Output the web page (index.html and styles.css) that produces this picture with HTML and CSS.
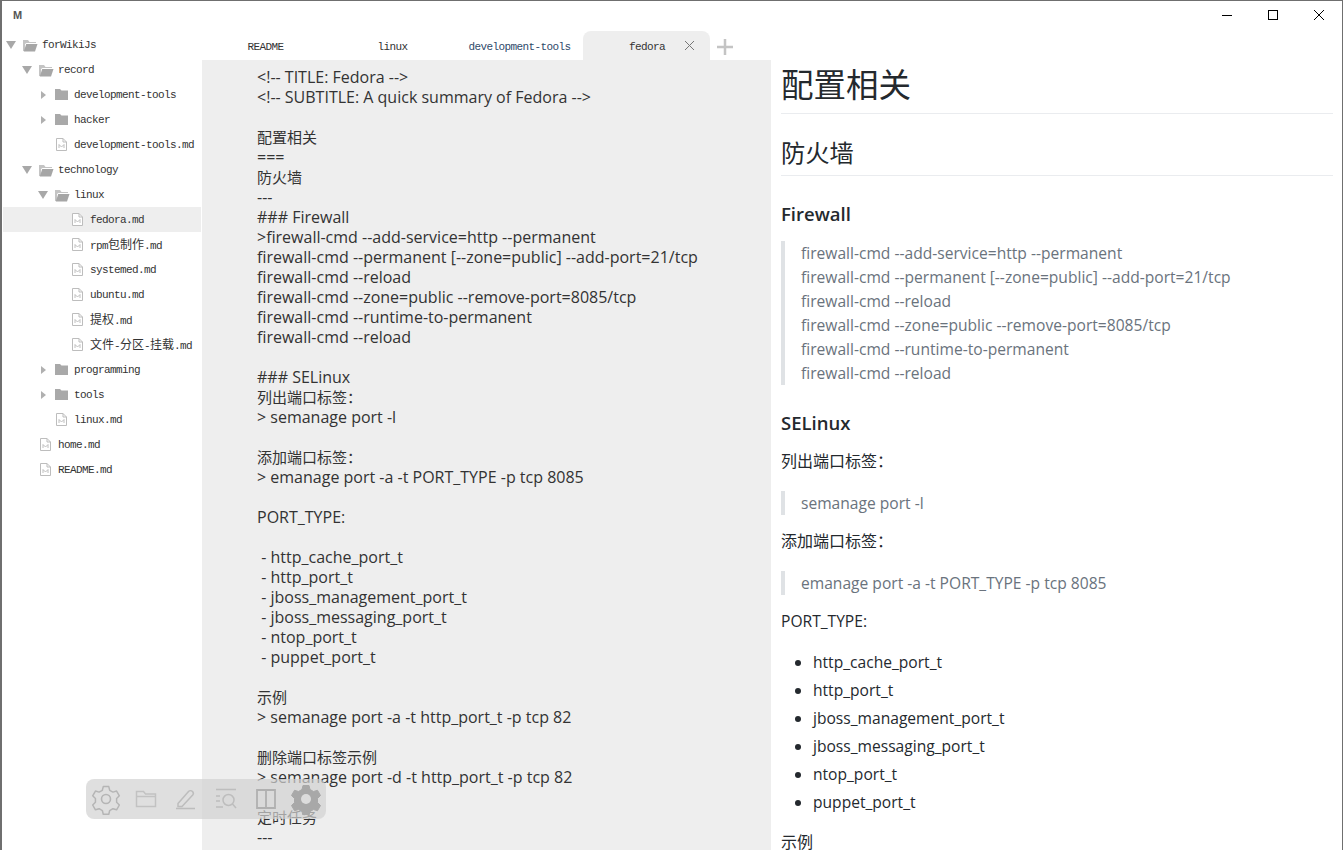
FILE: index.html
```html
<!DOCTYPE html>
<html lang="zh">
<head>
<meta charset="utf-8">
<title>Fedora</title>
<link rel="stylesheet" href="styles.css">
</head>
<body>
<svg class="defs" width="0" height="0" aria-hidden="true">
  <symbol id="open" viewBox="0 0 16 14"><path d="M1 13V2h5l1.500 2H14v1H4.500L3 6v7z" fill="#c4c4c4"/><path d="M4.200 6H15.500L13 13.500H1.800z" fill="#a6a6a6"/></symbol>
  <symbol id="closed" viewBox="0 0 13 11"><path d="M0 0h5l1.500 1.500H13V11H0z" fill="#a9a9a9"/></symbol>
  <symbol id="file" viewBox="0 0 11 13"><path d="M.5.500H7L10.500 4v8.500H.5z" fill="#fff" stroke="#bdbdbd"/><path d="M7 .5V4h3.500" fill="none" stroke="#bdbdbd"/><path d="M3 10V6.500l2.500 2.500 2.500-2.500V10" fill="none" stroke="#b0b0b0" stroke-width=".8"/></symbol>
</svg>
<div class="window">
  <header class="titlebar">
    <span class="app-logo">M</span>
    <div class="controls">
      <svg width="14" height="14" viewBox="0 0 14 14"><path d="M2 7.500h10" stroke="#000" fill="none"/></svg>
      <svg width="14" height="14" viewBox="0 0 14 14"><rect x="2.500" y="2.500" width="9" height="9" stroke="#000" fill="none"/></svg>
      <svg width="14" height="14" viewBox="0 0 14 14"><path d="M2 2l10 10M12 2L2 12" stroke="#000" fill="none"/></svg>
    </div>
  </header>
  <div class="main">
    <aside class="tree">
      <div class="row l0"><i class="tri-open"></i><svg class="ic-open"><use href="#open"/></svg><span>forWikiJs</span></div>
      <div class="row l1"><i class="tri-open"></i><svg class="ic-open"><use href="#open"/></svg><span>record</span></div>
      <div class="row l2"><i class="tri-closed"></i><svg class="ic-closed"><use href="#closed"/></svg><span>development-tools</span></div>
      <div class="row l2"><i class="tri-closed"></i><svg class="ic-closed"><use href="#closed"/></svg><span>hacker</span></div>
      <div class="row l2 leaf"><svg class="ic-file"><use href="#file"/></svg><span>development-tools.md</span></div>
      <div class="row l1"><i class="tri-open"></i><svg class="ic-open"><use href="#open"/></svg><span>technology</span></div>
      <div class="row l2"><i class="tri-open"></i><svg class="ic-open"><use href="#open"/></svg><span>linux</span></div>
      <div class="row l3 leaf active"><svg class="ic-file"><use href="#file"/></svg><span>fedora.md</span></div>
      <div class="row l3 leaf"><svg class="ic-file"><use href="#file"/></svg><span>rpm<b class="cjk">包制作</b>.md</span></div>
      <div class="row l3 leaf"><svg class="ic-file"><use href="#file"/></svg><span>systemed.md</span></div>
      <div class="row l3 leaf"><svg class="ic-file"><use href="#file"/></svg><span>ubuntu.md</span></div>
      <div class="row l3 leaf"><svg class="ic-file"><use href="#file"/></svg><span><b class="cjk">提权</b>.md</span></div>
      <div class="row l3 leaf"><svg class="ic-file"><use href="#file"/></svg><span><b class="cjk">文件</b>-<b class="cjk">分区</b>-<b class="cjk">挂载</b>.md</span></div>
      <div class="row l2"><i class="tri-closed"></i><svg class="ic-closed"><use href="#closed"/></svg><span>programming</span></div>
      <div class="row l2"><i class="tri-closed"></i><svg class="ic-closed"><use href="#closed"/></svg><span>tools</span></div>
      <div class="row l2 leaf"><svg class="ic-file"><use href="#file"/></svg><span>linux.md</span></div>
      <div class="row l1 leaf"><svg class="ic-file"><use href="#file"/></svg><span>home.md</span></div>
      <div class="row l1 leaf"><svg class="ic-file"><use href="#file"/></svg><span>README.md</span></div>
    </aside>
    <section class="workspace">
      <nav class="tabs">
        <div class="tab">README</div>
        <div class="tab">linux</div>
        <div class="tab tab-link">development-tools</div>
        <div class="tab current"><span>fedora</span><svg class="tab-close" width="11" height="11" viewBox="0 0 11 11"><path d="M1 1l9 9M10 1l-9 9" stroke="#777" fill="none"/></svg></div>
        <svg class="tab-add" width="18" height="18" viewBox="0 0 18 18"><path d="M9 1v16M1 9h16" stroke="#c4c4c4" stroke-width="2.500" fill="none"/></svg>
      </nav>
      <pre class="editor">&lt;!-- TITLE: Fedora --&gt;
&lt;!-- SUBTITLE: A quick summary of Fedora --&gt;

<b class="han">配置相关</b>
===
<b class="han">防火墙</b>
---
### Firewall
&gt;firewall-cmd --add-service=http --permanent
firewall-cmd --permanent [--zone=public] --add-port=21/tcp
firewall-cmd --reload
firewall-cmd --zone=public --remove-port=8085/tcp
firewall-cmd --runtime-to-permanent
firewall-cmd --reload

### SELinux
<b class="han">列出端口标签：</b>
&gt; semanage port -l

<b class="han">添加端口标签：</b>
&gt; emanage port -a -t PORT_TYPE -p tcp 8085

PORT_TYPE:

 - http_cache_port_t
 - http_port_t
 - jboss_management_port_t
 - jboss_messaging_port_t
 - ntop_port_t
 - puppet_port_t

<b class="han">示例</b>
&gt; semanage port -a -t http_port_t -p tcp 82

<b class="han">删除端口标签示例</b>
&gt; semanage port -d -t http_port_t -p tcp 82

<b class="han">定时任务</b>
---</pre>
    </section>
    <article class="preview">
      <h1>配置相关</h1>
      <h2>防火墙</h2>
      <h3>Firewall</h3>
      <blockquote class="first">firewall-cmd --add-service=http --permanent<br>firewall-cmd --permanent [--zone=public] --add-port=21/tcp<br>firewall-cmd --reload<br>firewall-cmd --zone=public --remove-port=8085/tcp<br>firewall-cmd --runtime-to-permanent<br>firewall-cmd --reload</blockquote>
      <h3>SELinux</h3>
      <p class="zh">列出端口标签：</p>
      <blockquote>semanage port -l</blockquote>
      <p class="zh">添加端口标签：</p>
      <blockquote>emanage port -a -t PORT_TYPE -p tcp 8085</blockquote>
      <p>PORT_TYPE:</p>
      <ul>
        <li>http_cache_port_t</li>
        <li>http_port_t</li>
        <li>jboss_management_port_t</li>
        <li>jboss_messaging_port_t</li>
        <li>ntop_port_t</li>
        <li>puppet_port_t</li>
      </ul>
      <p class="zh after-list">示例</p>
    </article>
  </div>
  <div class="dock">
    <svg width="32" height="32" viewBox="0 0 32 32"><path d="M13 2.500h6l1 4 3.500 2 4-1.200 3 5.200-3 2.900v4.200l3 2.900-3 5.200-4-1.200-3.500 2-1 4h-6l-1-4-3.500-2-4 1.200-3-5.200 3-2.900v-4.200l-3-2.900 3-5.200 4 1.200 3.500-2z" transform="translate(1.300 1.300) scale(.92)" fill="none" stroke="#b5b5b5" stroke-width="1.600" stroke-linejoin="round"/><circle cx="16" cy="16" r="4.500" fill="none" stroke="#b5b5b5" stroke-width="1.600"/></svg>
    <svg width="22" height="20" viewBox="0 0 22 20"><path d="M1.500 17.500V2.500h7l2 2.500h10v12.500zM1.500 7.500h19" fill="none" stroke="#c2c2c2" stroke-width="1.500"/></svg>
    <svg width="22" height="22" viewBox="0 0 22 22"><path d="M3 15.500L13.500 3.500c1-1 3-1 4 0s1 2.500.2 3.500L7 18.500H3zM1 20.500h19" fill="none" stroke="#bdbdbd" stroke-width="1.500"/></svg>
    <svg width="22" height="22" viewBox="0 0 22 22"><path d="M1 1.500h20M1 8h4M1 13h4M1 19h7" fill="none" stroke="#bdbdbd" stroke-width="1.500"/><circle cx="13.500" cy="12" r="5.500" fill="none" stroke="#bdbdbd" stroke-width="1.500"/><path d="M17.500 16l3.500 4" fill="none" stroke="#bdbdbd" stroke-width="1.500"/></svg>
    <svg width="20" height="20" viewBox="0 0 20 20"><path d="M1 1h18v18H1zM10 1v18" fill="none" stroke="#b0b0b0" stroke-width="1.800"/></svg>
    <svg width="32" height="32" viewBox="0 0 32 32"><path d="M13 2.500h6l1 4 3.500 2 4-1.200 3 5.200-3 2.900v4.200l3 2.900-3 5.200-4-1.200-3.500 2-1 4h-6l-1-4-3.500-2-4 1.200-3-5.200 3-2.900v-4.200l-3-2.900 3-5.200 4 1.200 3.500-2z" fill="#a8a8a8" stroke="#a8a8a8" stroke-linejoin="round"/><circle cx="16" cy="16" r="5" fill="#dcdcdc"/></svg>
  </div>
</div>
</body>
</html>
```
FILE: styles.css
```css
html, body { margin: 0; padding: 0; height: 100%; overflow: hidden; background: #fff; }
.defs { position: absolute; }
.window {
  position: relative;
  box-sizing: border-box;
  width: 1343px;
  height: 850px;
  border-top: 1px solid #6f6f6f;
  border-left: 2px solid #6f6f6f;
  border-right: 1px solid #6f6f6f;
  overflow: hidden;
  display: flex;
  flex-direction: column;
  background: #fff;
}
.titlebar {
  height: 30px;
  flex: none;
  display: flex;
  align-items: center;
  justify-content: space-between;
}
.app-logo {
  margin-left: 11px;
  margin-top: -2px;
  font: bold 11px "Liberation Sans", sans-serif;
  color: #555;
}
.controls { display: flex; gap: 32px; margin-right: 16px; margin-top: -2px; }
.main { flex: 1; display: flex; min-height: 0; }

.tree { width: 200px; flex: none; padding-top: 1px; font: 11px/25px "Liberation Mono", "Noto Sans CJK SC", monospace; letter-spacing: -.6px; color: #333; }
.row { height: 25px; display: flex; align-items: center; white-space: nowrap; }
.row span { padding-top: 2px; }
.cjk { font: 12px/23px "Noto Sans CJK SC", sans-serif; letter-spacing: 0; }
.active { background: #eeeeee; margin: 0 1px; padding-left: 52px !important; }
.l0 { padding-left: 4px; }
.l1 { padding-left: 20px; }
.l2 { padding-left: 36px; }
.l3 { padding-left: 53px; }
.l1.leaf { padding-left: 21px; }
.l2.leaf { padding-left: 37px; }
.tri-open {
  width: 0; height: 0; flex: none;
  border-left: 5px solid transparent;
  border-right: 5px solid transparent;
  border-top: 8px solid #a8a8a8;
}
.tri-closed {
  width: 0; height: 0; flex: none;
  margin-left: 3px; margin-right: 9px;
  border-top: 4px solid transparent;
  border-bottom: 4px solid transparent;
  border-left: 5px solid #b0b0b0;
}
.ic-open { width: 16px; height: 14px; margin-left: 6px; margin-right: 4px; flex: none; }
.ic-closed { width: 13px; height: 11px; margin-right: 6px; flex: none; }
.ic-file { width: 11px; height: 13px; margin-left: 17px; margin-right: 7px; flex: none; }

.workspace { width: 569px; flex: none; display: flex; flex-direction: column; min-height: 0; }
.tabs { height: 29px; flex: none; display: flex; align-items: center; font: 11px "Liberation Mono", monospace; letter-spacing: -.6px; color: #333; }
.tab { height: 29px; width: 127px; padding-top: 2px; display: flex; align-items: center; justify-content: center; box-sizing: border-box; }
.tab-link { color: #2f4a6a; }
.tab.current { background: #eeeeee; border-radius: 8px 8px 0 0; position: relative; justify-content: flex-start; padding-left: 46px; }
.tab-close { position: absolute; right: 15px; top: 9px; }
.tab-add { margin-left: 6px; margin-top: 2px; }
.editor {
  flex: 1;
  margin: 0;
  background: #eeeeee;
  padding: 7px 0 0 55px;
  font: 16px/20px "Open Sans", "Noto Sans CJK SC", sans-serif;
  color: #333;
  overflow: hidden;
  min-height: 0;
}
.han { font-weight: 400; font-size: 15px; }

.preview { flex: 1; min-width: 0; padding: 0 9px 0 10px; font: 15.600px/24px "Open Sans", "Noto Sans CJK SC", sans-serif; color: #24292e; overflow: hidden; }
.preview h1 { font-size: 32.500px; line-height: 40px; font-weight: 400; margin: 34px 0 0; padding: 0 0 8px; border-bottom: 1px solid #eaecef; }
.preview h2 { font-size: 24.300px; line-height: 30px; font-weight: 400; margin: 24px 0 0; padding: 0 0 7px; border-bottom: 1px solid #eaecef; }
.preview h3 { font-size: 18.500px; line-height: 25px; font-weight: 600; margin: 25px 0 0; }
.preview blockquote { margin: 18px 0 0; padding: 0 0 0 16px; border-left: 4px solid #dfe2e5; color: #6a737d; }
.preview blockquote.first { margin-top: 15px; }
.preview p { margin: 14px 0 0; }
.preview p.zh { font-size: 16px; }
.preview ul { margin: 17px 0 0; padding: 0 0 0 32px; }
.preview li { height: 24px; margin-bottom: 4px; }
.preview p.after-list { margin-top: 16px; }

.dock {
  position: absolute;
  left: 84px;
  top: 778px;
  width: 240px;
  height: 40px;
  background: rgba(210, 210, 210, .7);
  border-radius: 8px;
  display: grid;
  grid-template-columns: repeat(6, 40px);
  justify-items: center;
  align-items: center;
}
```
